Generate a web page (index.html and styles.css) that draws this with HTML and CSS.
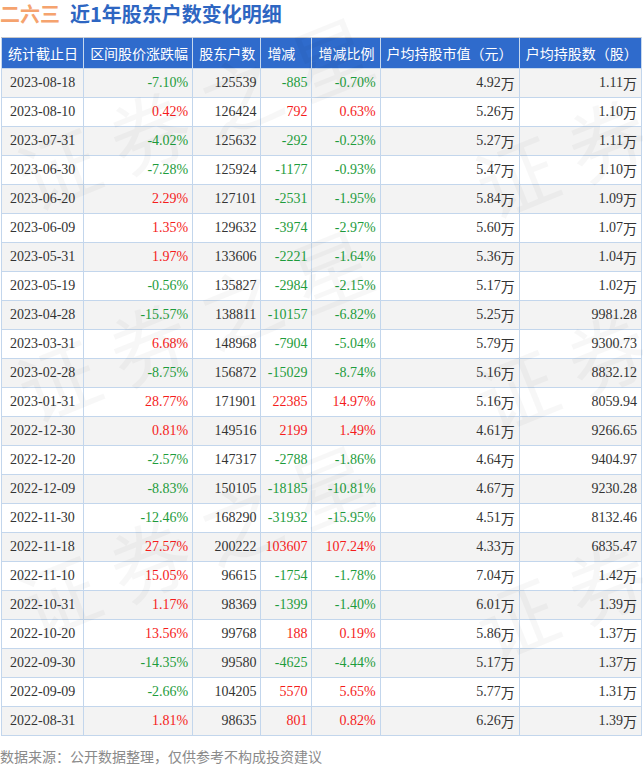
FILE: index.html
```html
<!DOCTYPE html>
<html lang="zh-CN">
<head>
<meta charset="utf-8">
<title>二六三 近1年股东户数变化明细</title>
<link rel="stylesheet" href="styles.css">
</head>
<body>
<div class="page">
  <h1 class="title"><span class="stock">二六三</span><span class="subject">近1年股东户数变化明细</span></h1>
  <table class="grid">
    <colgroup>
      <col class="c1"><col class="c2"><col class="c3"><col class="c4"><col class="c5"><col class="c6"><col class="c7">
    </colgroup>
    <thead>
      <tr><th>统计截止日</th><th>区间股价涨跌幅</th><th>股东户数</th><th>增减</th><th>增减比例</th><th>户均持股市值（元）</th><th>户均持股数（股）</th></tr>
    </thead>
    <tbody>
      <tr><td class="d">2023-08-18</td><td class="g">-7.10%</td><td>125539</td><td class="g">-885</td><td class="g">-0.70%</td><td>4.92<span class="w">万</span></td><td>1.11<span class="w">万</span></td></tr>
      <tr><td class="d">2023-08-10</td><td class="r">0.42%</td><td>126424</td><td class="r">792</td><td class="r">0.63%</td><td>5.26<span class="w">万</span></td><td>1.10<span class="w">万</span></td></tr>
      <tr><td class="d">2023-07-31</td><td class="g">-4.02%</td><td>125632</td><td class="g">-292</td><td class="g">-0.23%</td><td>5.27<span class="w">万</span></td><td>1.11<span class="w">万</span></td></tr>
      <tr><td class="d">2023-06-30</td><td class="g">-7.28%</td><td>125924</td><td class="g">-1177</td><td class="g">-0.93%</td><td>5.47<span class="w">万</span></td><td>1.10<span class="w">万</span></td></tr>
      <tr><td class="d">2023-06-20</td><td class="r">2.29%</td><td>127101</td><td class="g">-2531</td><td class="g">-1.95%</td><td>5.84<span class="w">万</span></td><td>1.09<span class="w">万</span></td></tr>
      <tr><td class="d">2023-06-09</td><td class="r">1.35%</td><td>129632</td><td class="g">-3974</td><td class="g">-2.97%</td><td>5.60<span class="w">万</span></td><td>1.07<span class="w">万</span></td></tr>
      <tr><td class="d">2023-05-31</td><td class="r">1.97%</td><td>133606</td><td class="g">-2221</td><td class="g">-1.64%</td><td>5.36<span class="w">万</span></td><td>1.04<span class="w">万</span></td></tr>
      <tr><td class="d">2023-05-19</td><td class="g">-0.56%</td><td>135827</td><td class="g">-2984</td><td class="g">-2.15%</td><td>5.17<span class="w">万</span></td><td>1.02<span class="w">万</span></td></tr>
      <tr><td class="d">2023-04-28</td><td class="g">-15.57%</td><td>138811</td><td class="g">-10157</td><td class="g">-6.82%</td><td>5.25<span class="w">万</span></td><td>9981.28</td></tr>
      <tr><td class="d">2023-03-31</td><td class="r">6.68%</td><td>148968</td><td class="g">-7904</td><td class="g">-5.04%</td><td>5.79<span class="w">万</span></td><td>9300.73</td></tr>
      <tr><td class="d">2023-02-28</td><td class="g">-8.75%</td><td>156872</td><td class="g">-15029</td><td class="g">-8.74%</td><td>5.16<span class="w">万</span></td><td>8832.12</td></tr>
      <tr><td class="d">2023-01-31</td><td class="r">28.77%</td><td>171901</td><td class="r">22385</td><td class="r">14.97%</td><td>5.16<span class="w">万</span></td><td>8059.94</td></tr>
      <tr><td class="d">2022-12-30</td><td class="r">0.81%</td><td>149516</td><td class="r">2199</td><td class="r">1.49%</td><td>4.61<span class="w">万</span></td><td>9266.65</td></tr>
      <tr><td class="d">2022-12-20</td><td class="g">-2.57%</td><td>147317</td><td class="g">-2788</td><td class="g">-1.86%</td><td>4.64<span class="w">万</span></td><td>9404.97</td></tr>
      <tr><td class="d">2022-12-09</td><td class="g">-8.83%</td><td>150105</td><td class="g">-18185</td><td class="g">-10.81%</td><td>4.67<span class="w">万</span></td><td>9230.28</td></tr>
      <tr><td class="d">2022-11-30</td><td class="g">-12.46%</td><td>168290</td><td class="g">-31932</td><td class="g">-15.95%</td><td>4.51<span class="w">万</span></td><td>8132.46</td></tr>
      <tr><td class="d">2022-11-18</td><td class="r">27.57%</td><td>200222</td><td class="r">103607</td><td class="r">107.24%</td><td>4.33<span class="w">万</span></td><td>6835.47</td></tr>
      <tr><td class="d">2022-11-10</td><td class="r">15.05%</td><td>96615</td><td class="g">-1754</td><td class="g">-1.78%</td><td>7.04<span class="w">万</span></td><td>1.42<span class="w">万</span></td></tr>
      <tr><td class="d">2022-10-31</td><td class="r">1.17%</td><td>98369</td><td class="g">-1399</td><td class="g">-1.40%</td><td>6.01<span class="w">万</span></td><td>1.39<span class="w">万</span></td></tr>
      <tr><td class="d">2022-10-20</td><td class="r">13.56%</td><td>99768</td><td class="r">188</td><td class="r">0.19%</td><td>5.86<span class="w">万</span></td><td>1.37<span class="w">万</span></td></tr>
      <tr><td class="d">2022-09-30</td><td class="g">-14.35%</td><td>99580</td><td class="g">-4625</td><td class="g">-4.44%</td><td>5.17<span class="w">万</span></td><td>1.37<span class="w">万</span></td></tr>
      <tr><td class="d">2022-09-09</td><td class="g">-2.66%</td><td>104205</td><td class="r">5570</td><td class="r">5.65%</td><td>5.77<span class="w">万</span></td><td>1.31<span class="w">万</span></td></tr>
      <tr><td class="d">2022-08-31</td><td class="r">1.81%</td><td>98635</td><td class="r">801</td><td class="r">0.82%</td><td>6.26<span class="w">万</span></td><td>1.39<span class="w">万</span></td></tr>
    </tbody>
  </table>
  <p class="source">数据来源：公开数据整理，仅供参考不构成投资建议</p>
  <div class="watermarks" aria-hidden="true">
    <span class="wm wm1">证券之星</span>
    <span class="wm wm2">证券之星</span>
    <span class="wm wm3">证券之星</span>
    <span class="wm wm4">证券之星</span>
    <span class="wm wm5">证券之星</span>
    <span class="wm wm6">证券之星</span>
  </div>
</div>
</body>
</html>
```

FILE: styles.css
```css
html, body {
  margin: 0;
  padding: 0;
  background: #ffffff;
}

.page {
  position: relative;
  width: 643px;
  height: 767px;
  overflow: hidden;
  font-family: "Noto Sans CJK SC", "Noto Sans", sans-serif;
}

.title {
  margin: 0;
  height: 37px;
  padding-top: 1px;
  box-sizing: border-box;
  font-size: 20px;
  line-height: 26px;
  font-weight: bold;
  display: flex;
  gap: 10px;
}

.stock {
  color: #f5a36e;
}

.subject {
  color: #2e66c2;
}

.grid {
  margin-left: 1px;
  width: 641px;
  border-collapse: collapse;
  table-layout: fixed;
  border: 1px solid #c9c9c9;
}

.c1 { width: 82px; }
.c2 { width: 109px; }
.c3 { width: 68px; }
.c4 { width: 51px; }
.c5 { width: 68px; }
.c6 { width: 139px; }
.c7 { width: 122px; }

.grid thead tr {
  height: 31px;
}

.grid th {
  background: #2f6bcc;
  color: #ffffff;
  font-weight: normal;
  font-size: 14px;
  padding: 0 0 0 6px;
  text-align: left;
  white-space: nowrap;
  border: 1px solid #c6d8ee;
  border-top-color: #c9c9c9;
  line-height: 18px;
  overflow: hidden;
}

.grid tbody tr {
  height: 29px;
}

.grid td {
  padding: 0 4px 0 0;
  border: 1px solid #c3d6ec;
  font-family: "Liberation Serif", "Noto Sans CJK SC", serif;
  font-size: 14px;
  color: #333333;
  text-align: right;
  white-space: nowrap;
  line-height: 16px;
  overflow: hidden;
}

.grid tbody tr:nth-child(odd) td {
  background: #f3f3f3;
}

.grid tbody tr:nth-child(even) td {
  background: #ffffff;
}

.grid td.d {
  text-align: left;
  padding: 0 0 0 8px;
}

.grid td.g {
  color: #1e9c3c;
}

.grid td.r {
  color: #f51c1c;
}

.w {
  font-family: "Noto Sans CJK SC", sans-serif;
  font-size: 14px;
  line-height: 0;
  position: relative;
  top: 2px;
}

.source {
  margin: 10px 0 0 0;
  font-size: 14px;
  line-height: 20px;
  color: #8a8a8a;
}

.watermarks {
  position: absolute;
  inset: 0;
  pointer-events: none;
}

.wm {
  position: absolute;
  font-size: 80px;
  letter-spacing: 18px;
  color: rgba(0, 0, 0, 0.03);
  white-space: nowrap;
  transform-origin: left center;
  transform: rotate(-22deg);
  line-height: 1;
  font-family: "Noto Sans CJK SC", sans-serif;
}

.wm1 { left: 20px; top: 140px; }
.wm2 { left: 20px; top: 352px; }
.wm3 { left: 20px; top: 568px; }
.wm4 { left: 478px; top: 148px; }
.wm5 { left: 478px; top: 362px; }
.wm6 { left: 478px; top: 590px; }
```
